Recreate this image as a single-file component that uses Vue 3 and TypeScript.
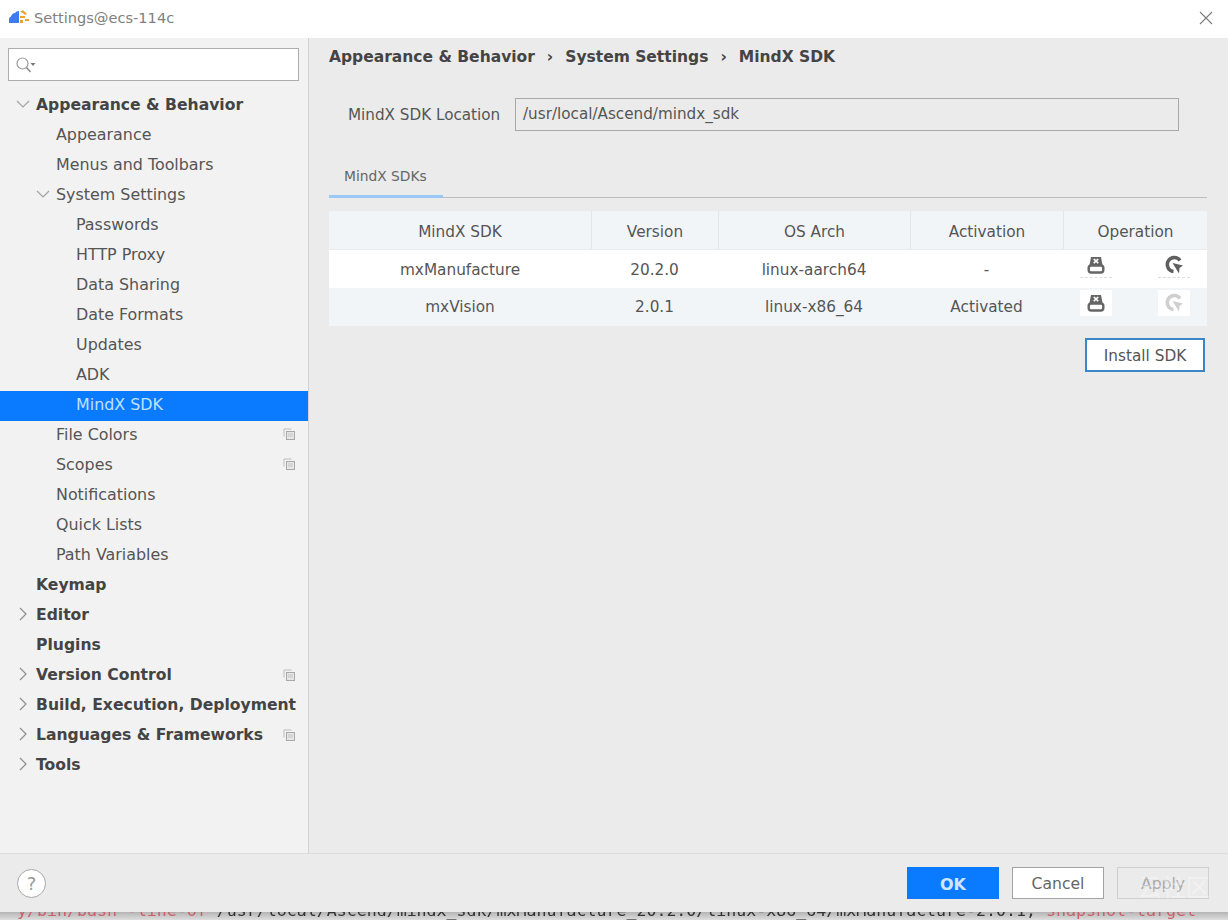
<template>
  <div class="dialog">
    <header class="titlebar">
      <svg class="logo" width="20" height="14" viewBox="0 0 20 14">
        <path d="M0 13 V9 Q0 7 2 6.500 Q3 3 6 3 Q7 1 10 1 V13 Z" fill="#3f7cf0" />
        <path d="M11 2 L14 0 L18 4 L16 5 L14 3 Z M11 6 H16 V8 H11 Z M16 9 H20 V11 H16 Z M11 10 H14 V13 H11 Z" fill="#f0a030" />
      </svg>
      <span class="title">Settings@ecs-114c</span>
      <svg class="close" width="14" height="14" viewBox="0 0 14 14">
        <path d="M1 1 L13 13 M13 1 L1 13" stroke="#7a7a7a" stroke-width="1.1" fill="none" />
      </svg>
    </header>

    <div class="body">
      <aside class="sidebar">
        <div class="search">
          <svg width="20" height="16" viewBox="0 0 20 16">
            <circle cx="6.500" cy="6.500" r="5.500" stroke="#9a9a9a" stroke-width="1.2" fill="none" />
            <path d="M10.500 10.500 L14.500 15" stroke="#8a8a8a" stroke-width="1.5" />
            <path d="M14.500 6 H19.500 L17 9 Z" fill="#777" />
          </svg>
        </div>
        <ul class="tree">
          <li
            v-for="item in tree"
            :key="item.label"
            class="node"
            :class="[`level-${item.level}`, { bold: item.bold, selected: item.selected }]"
          >
            <svg v-if="item.arrow" class="arrow" width="14" height="14" viewBox="0 0 14 14">
              <path v-if="item.arrow === 'down'" d="M1 4 L7 10 L13 4" stroke="#a3a3a3" stroke-width="1.2" fill="none" />
              <path v-else d="M4 1 L10 7 L4 13" stroke="#8f8f8f" stroke-width="1.2" fill="none" />
            </svg>
            <span class="node-label">{{ item.label }}</span>
            <svg v-if="item.copy" class="copy" width="12" height="12" viewBox="0 0 12 12">
              <path d="M1 8.500 V1 H8.500" stroke="#bdbdbd" fill="none" />
              <rect x="3.500" y="3.500" width="8" height="8" stroke="#a8a8a8" fill="#e6e6e6" />
              <path d="M5 6 H10 M5 8 H10" stroke="#c4c4c4" />
            </svg>
          </li>
        </ul>
      </aside>

      <main class="content">
        <div class="crumbs">
          <span>Appearance &amp; Behavior</span>
          <i class="sep">›</i>
          <span>System Settings</span>
          <i class="sep">›</i>
          <span>MindX SDK</span>
        </div>

        <div class="location">
          <label>MindX SDK Location</label>
          <div class="path-field">/usr/local/Ascend/mindx_sdk</div>
        </div>

        <div class="tabs">
          <div class="tab">MindX SDKs</div>
        </div>

        <div class="table">
          <div class="row head">
            <div v-for="h in headers" :key="h" class="cell">{{ h }}</div>
          </div>
          <div v-for="(r, i) in rows" :key="r.name" class="row" :class="i % 2 ? 'odd' : 'even'">
            <div class="cell">{{ r.name }}</div>
            <div class="cell">{{ r.version }}</div>
            <div class="cell">{{ r.arch }}</div>
            <div class="cell">{{ r.activation }}</div>
            <div class="cell ops">
              <span class="op-btn">
                <svg width="20" height="20" viewBox="0 0 20 20">
                  <path d="M3.500 10 L5 2 H15 L16.500 10 Z" fill="#666" />
                  <path d="M7.800 4 L12.200 8.200 M12.200 4 L7.800 8.200" stroke="#fff" stroke-width="1.7" />
                  <rect x="2.700" y="10.500" width="14.600" height="7" rx="2.500" stroke="#666" stroke-width="2.400" fill="#fff" />
                </svg>
              </span>
              <span class="op-btn" :class="{ faded: r.refreshOff }">
                <svg width="20" height="20" viewBox="0 0 20 20">
                  <path d="M16 5.500 A7 7 0 1 0 9.500 16.500" stroke="currentColor" stroke-width="3.400" fill="none" />
                  <path d="M8.500 8 L19 10.500 L15.500 13 L15 18.500 Z" fill="currentColor" />
                </svg>
              </span>
            </div>
          </div>
        </div>

        <div class="actions">
          <button class="install">Install SDK</button>
        </div>
      </main>
    </div>

    <footer class="footer">
      <span class="help">?</span>
      <div class="buttons">
        <button class="btn ok">OK</button>
        <button class="btn">Cancel</button>
        <button class="btn disabled">Apply</button>
      </div>
      <span class="watermark">云社区</span>
    </footer>

    <div class="behind">
      <div class="behind-text">
        <span class="red">y/bin/bash -line-of </span>/usr/local/Ascend/mindx_sdk/mxManufacture_20.2.0/linux-x86_64/mxManufacture-2.0.1, <span class="red">snapshot-target</span>
      </div>
    </div>
  </div>
</template>

<script setup lang="ts">
interface TreeItem {
  label: string
  level: number
  bold?: boolean
  arrow?: 'down' | 'right'
  copy?: boolean
  selected?: boolean
}

const tree: TreeItem[] = [
  { label: 'Appearance & Behavior', level: 0, bold: true, arrow: 'down' },
  { label: 'Appearance', level: 1 },
  { label: 'Menus and Toolbars', level: 1 },
  { label: 'System Settings', level: 1, arrow: 'down' },
  { label: 'Passwords', level: 2 },
  { label: 'HTTP Proxy', level: 2 },
  { label: 'Data Sharing', level: 2 },
  { label: 'Date Formats', level: 2 },
  { label: 'Updates', level: 2 },
  { label: 'ADK', level: 2 },
  { label: 'MindX SDK', level: 2, selected: true },
  { label: 'File Colors', level: 1, copy: true },
  { label: 'Scopes', level: 1, copy: true },
  { label: 'Notifications', level: 1 },
  { label: 'Quick Lists', level: 1 },
  { label: 'Path Variables', level: 1 },
  { label: 'Keymap', level: 0, bold: true },
  { label: 'Editor', level: 0, bold: true, arrow: 'right' },
  { label: 'Plugins', level: 0, bold: true },
  { label: 'Version Control', level: 0, bold: true, arrow: 'right', copy: true },
  { label: 'Build, Execution, Deployment', level: 0, bold: true, arrow: 'right' },
  { label: 'Languages & Frameworks', level: 0, bold: true, arrow: 'right', copy: true },
  { label: 'Tools', level: 0, bold: true, arrow: 'right' }
]

const headers = ['MindX SDK', 'Version', 'OS Arch', 'Activation', 'Operation']

const rows = [
  { name: 'mxManufacture', version: '20.2.0', arch: 'linux-aarch64', activation: '-', refreshOff: false },
  { name: 'mxVision', version: '2.0.1', arch: 'linux-x86_64', activation: 'Activated', refreshOff: true }
]
</script>

<style>
html,
body {
  margin: 0;
  background: #ebebeb;
}
</style>

<style scoped>
.dialog {
  width: 1228px;
  height: 920px;
  display: flex;
  flex-direction: column;
  position: relative;
  overflow: hidden;
  font-family: "DejaVu Sans", sans-serif;
  font-size: 16px;
  color: #555;
  background: #ebebeb;
}

.titlebar {
  height: 38px;
  flex: none;
  display: flex;
  align-items: center;
  padding: 0 15px 3px 9px;
  box-sizing: border-box;
  background: #fff;
}
.logo {
  margin-right: 5px;
  margin-top: -1px;
}
.title {
  font-size: 14.600px;
  color: #808080;
}
.close {
  margin-left: auto;
}

.body {
  flex: 1;
  display: flex;
  min-height: 0;
}

.sidebar {
  width: 309px;
  flex: none;
  box-sizing: border-box;
  padding-top: 10px;
  background: #f2f2f2;
  border-right: 1px solid #d2d2d2;
}
.search {
  height: 33px;
  margin: 0 9px 0 8px;
  padding-left: 7px;
  box-sizing: border-box;
  display: flex;
  align-items: center;
  background: #fff;
  border: 1px solid #adadad;
}
.tree {
  list-style: none;
  margin: 10px 0 0;
  padding: 0;
}
.node {
  height: 30px;
  padding: 0 13px 4px 0;
  box-sizing: border-box;
  display: flex;
  align-items: center;
  position: relative;
  white-space: nowrap;
  font-size: 15.900px;
  color: #555;
}
.level-0 .node-label {
  margin-left: 36px;
}
.level-1 .node-label {
  margin-left: 56px;
}
.level-2 .node-label {
  margin-left: 76px;
}
.node.bold {
  padding-bottom: 2px;
  font-weight: 700;
  font-size: 15.600px;
  color: #444;
}
.selected {
  background: #0a7bff;
  color: #bfe0ff;
}
.arrow {
  position: absolute;
  top: 6px;
}
.level-0 .arrow {
  left: 16px;
}
.level-1 .arrow {
  left: 36px;
}
.copy {
  margin-left: auto;
}

.content {
  flex: 1;
  min-width: 0;
  padding: 0 21px 0 20px;
}
.crumbs {
  height: 38px;
  display: flex;
  align-items: center;
  font-size: 15.500px;
  font-weight: 700;
  color: #444;
}
.sep {
  font-style: normal;
  margin: 0 12px;
}
.location {
  display: flex;
  align-items: center;
  margin-top: 22px;
  padding-left: 19px;
  font-size: 15.200px;
}
.location label {
  width: 167px;
  flex: none;
}
.path-field {
  width: 664px;
  height: 33px;
  box-sizing: border-box;
  padding-left: 7px;
  line-height: 31px;
  background: #ebebeb;
  border: 1px solid #a8a8a8;
}
.tabs {
  margin-top: 28px;
  height: 39px;
  border-bottom: 1px solid #bdbdbd;
  box-sizing: border-box;
}
.tab {
  width: 114px;
  height: 39px;
  box-sizing: border-box;
  padding: 9px 0 0 15px;
  font-size: 13.800px;
  color: #666;
  border-bottom: 3px solid #9cc8f5;
}
.table {
  margin-top: 13px;
  font-size: 15.300px;
}
.row {
  display: grid;
  grid-template-columns: 262px 127px 192px 153px 144px;
  height: 38px;
  text-align: center;
}
.head {
  height: 39px;
  background: #f2f5f8;
  border-bottom: 1px solid #e8ebee;
  box-sizing: border-box;
}
.even {
  background: #fff;
}
.odd {
  background: #f2f5f8;
}
.cell {
  display: flex;
  align-items: center;
  justify-content: center;
  padding-top: 1px;
  box-sizing: border-box;
}
.head .cell {
  padding: 4px 0 0;
}
.odd .cell {
  padding-top: 0;
}
.head .cell + .cell {
  border-left: 1px solid #e4e7ea;
}
.cell.ops {
  justify-content: space-between;
  align-items: flex-start;
  padding: 2px 17px 0 17px;
}
.op-btn {
  width: 32px;
  height: 26px;
  box-sizing: border-box;
  display: flex;
  align-items: center;
  justify-content: center;
  color: #5f5f5f;
}
.even .op-btn {
  border-bottom: 1px dashed #dcdcdc;
}
.odd .op-btn {
  background: #fff;
}
.op-btn.faded {
  color: #cfcfcf;
}
.actions {
  display: flex;
  justify-content: flex-end;
  padding: 12px 2px 0 0;
}
.install {
  width: 120px;
  height: 34px;
  padding: 1px 0 0;
  box-sizing: border-box;
  font: inherit;
  font-size: 15.300px;
  color: #555;
  background: #fff;
  border: 2px solid #3b86c6;
}

.footer {
  height: 59px;
  flex: none;
  box-sizing: border-box;
  position: relative;
  display: flex;
  align-items: center;
  padding: 0 19px 0 17px;
  background: #ebebeb;
  border-top: 1px solid #dcdcdc;
}
.help {
  width: 29px;
  height: 29px;
  box-sizing: border-box;
  display: flex;
  align-items: center;
  justify-content: center;
  font-size: 18px;
  color: #999;
  background: #fff;
  border: 1px solid #a8a8a8;
  border-radius: 50%;
}
.buttons {
  margin-left: auto;
  display: flex;
  gap: 13px;
}
.btn {
  width: 92px;
  height: 32px;
  padding: 2px 0 0;
  box-sizing: border-box;
  font: inherit;
  font-size: 15.600px;
  color: #666;
  background: #fff;
  border: 1px solid #a3a3a3;
}
.btn.ok {
  font-size: 16px;
  font-weight: 700;
  color: #cfe6ff;
  background: #0a7bff;
  border: none;
}
.btn.disabled {
  color: #a9a9a9;
  background: #ebebeb;
  border-color: #cfcfcf;
}
.watermark {
  position: absolute;
  right: 18px;
  top: 14px;
  font-size: 24px;
  font-family: "Noto Sans CJK SC", sans-serif;
  color: rgba(255, 255, 255, 0.35);
  pointer-events: none;
}

.behind {
  height: 8px;
  flex: none;
  overflow: hidden;
  background: linear-gradient(#b4b4b4, #dedede);
}
.behind-text {
  margin-top: -10px;
  padding-left: 17px;
  font-size: 16.600px;
  line-height: 18px;
  white-space: nowrap;
  color: #333;
  font-family: "DejaVu Sans Mono", monospace;
  filter: blur(0.5px);
}
.red {
  color: #c9606a;
}
</style>
